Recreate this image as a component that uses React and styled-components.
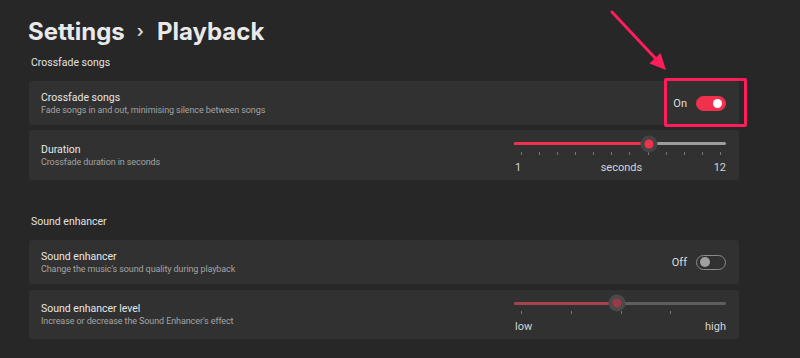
import React from 'react';
import styled, { createGlobalStyle } from 'styled-components';

const GlobalStyle = createGlobalStyle`
  html, body {
    margin: 0;
    padding: 0;
    background: #272727;
  }
  body {
    font-family: Roboto, "Noto Sans", sans-serif;
    color: #e8e8e8;
    -webkit-font-smoothing: antialiased;
  }
`;

const Page = styled.div`
  position: relative;
  width: 800px;
  height: 358px;
  box-sizing: border-box;
  padding: 13px 61px 0 29px;
  overflow: hidden;
`;

const Title = styled.h1`
  margin: 0 0 0 -1px;
  display: flex;
  align-items: center;
  height: 36px;
  font-family: Inter, Roboto, sans-serif;
  font-size: 24px;
  font-weight: 700;
  color: #e9e9e9;
`;

const Crumb = styled.span`
  font-size: 17px;
  font-weight: 600;
  margin: 0 13px 0 12px;
  color: #dcdcdc;
`;

const SectionLabel = styled.div`
  margin-top: ${(p) => p.$top}px;
  padding-left: 2px;
  font-size: 10.5px;
  line-height: 16px;
  color: #e2e2e2;
`;

const List = styled.div`
  display: flex;
  flex-direction: column;
  gap: ${(p) => p.$gap}px;
  margin-top: 10px;
`;

const Card = styled.div`
  position: relative;
  display: flex;
  align-items: center;
  justify-content: space-between;
  height: ${(p) => p.$h}px;
  box-sizing: border-box;
  padding: 0 13px 0 12px;
  background: #313131;
  border-radius: 3px;
`;

const TextCol = styled.div`
  display: flex;
  flex-direction: column;
`;

const CardTitle = styled.div`
  font-size: 10.5px;
  line-height: 13px;
  color: #e6e6e6;
`;

const CardSub = styled.div`
  font-size: 9px;
  line-height: 12px;
  letter-spacing: -0.1px;
  color: #a3a3a3;
`;

const ToggleRow = styled.div`
  display: flex;
  align-items: center;
  gap: 9px;
  font-size: 11px;
  color: #dedede;
`;

const Toggle = styled.div`
  box-sizing: border-box;
  width: 30px;
  height: 15px;
  border-radius: 8px;
  display: flex;
  align-items: center;
  justify-content: ${(p) => (p.$on ? 'flex-end' : 'flex-start')};
  padding: 0 3px;
  background: ${(p) => (p.$on ? '#f0304c' : 'transparent')};
  border: 1px solid ${(p) => (p.$on ? '#f0304c' : '#8a8a8a')};

  &::after {
    content: '';
    width: ${(p) => (p.$on ? 9 : 10)}px;
    height: ${(p) => (p.$on ? 9 : 10)}px;
    border-radius: 50%;
    background: ${(p) => (p.$on ? '#ffffff' : '#a0a0a0')};
  }
`;

const Highlight = styled.div`
  position: absolute;
  top: -3px;
  bottom: -2px;
  right: -8px;
  width: 83px;
  box-sizing: border-box;
  border: 3px solid #ff1d5b;
  border-radius: 2px;
  pointer-events: none;
`;

const SliderBox = styled.div`
  width: 212px;
  display: flex;
  flex-direction: column;
  margin-top: ${(p) => p.$shift}px;
`;

const TrackArea = styled.div`
  position: relative;
  height: 16px;
  display: flex;
  align-items: center;
`;

const Track = styled.div`
  display: flex;
  width: 100%;
  height: 3px;
  border-radius: 2px;
  overflow: hidden;
  background: ${(p) => p.$rest};
`;

const Fill = styled.div`
  height: 100%;
  background: ${(p) => p.$color};
`;

const Thumb = styled.div`
  position: absolute;
  top: 50%;
  width: 9px;
  height: 9px;
  border-radius: 50%;
  background: ${(p) => p.$color};
  box-shadow: 0 0 0 4px ${(p) => p.$halo};
  transform: translate(-50%, -50%);
`;

const Ticks = styled.div`
  display: flex;
  justify-content: space-between;
  padding: 0 5px 0 7px;
  height: 3px;
`;

const Tick = styled.span`
  width: 1px;
  height: 3px;
  background: ${(p) => (p.$hidden ? 'transparent' : '#767676')};
`;

const Scale = styled.div`
  display: flex;
  justify-content: space-between;
  margin-top: 7px;
  padding: 0 0 0 1px;
  font-size: 11px;
  line-height: 12px;
  color: #d4d4d4;

  & > span:nth-child(2):not(:last-child) {
    margin-left: 8px;
  }
`;

const Arrow = styled.svg`
  position: absolute;
  left: 0;
  top: 0;
  pointer-events: none;
`;

function Slider({ value, fill, rest, thumb, halo, ticks, labels, shift }) {
  return (
    <SliderBox $shift={shift}>
      <TrackArea>
        <Track $rest={rest}>
          <Fill $color={fill} style={{ width: `${value}%` }} />
        </Track>
        <Thumb $color={thumb} $halo={halo} style={{ left: `${value}%` }} />
      </TrackArea>
      <Ticks>
        {ticks.map((t, i) => (
          <Tick key={i} $hidden={!t} />
        ))}
      </Ticks>
      <Scale>
        {labels.map((l) => (
          <span key={l}>{l}</span>
        ))}
      </Scale>
    </SliderBox>
  );
}

export default function App() {
  return (
    <>
      <GlobalStyle />
      <Page>
        <Title>
          Settings<Crumb>›</Crumb>Playback
        </Title>

        <SectionLabel $top={6}>Crossfade songs</SectionLabel>
        <List $gap={5}>
          <Card $h={44}>
            <TextCol>
              <CardTitle>Crossfade songs</CardTitle>
              <CardSub>Fade songs in and out, minimising silence between songs</CardSub>
            </TextCol>
            <ToggleRow>
              On
              <Toggle $on />
            </ToggleRow>
            <Highlight />
          </Card>
          <Card $h={50}>
            <TextCol>
              <CardTitle>Duration</CardTitle>
              <CardSub>Crossfade duration in seconds</CardSub>
            </TextCol>
            <Slider
              value={63.5}
              fill="#f0304c"
              rest="#9d9d9d"
              thumb="#f3304e"
              halo="#444444"
              ticks={Array(12).fill(true)}
              labels={['1', 'seconds', '12']}
              shift={-1}
            />
          </Card>
        </List>

        <SectionLabel $top={34}>Sound enhancer</SectionLabel>
        <List $gap={6}>
          <Card $h={44}>
            <TextCol>
              <CardTitle>Sound enhancer</CardTitle>
              <CardSub>Change the music's sound quality during playback</CardSub>
            </TextCol>
            <ToggleRow>
              Off
              <Toggle />
            </ToggleRow>
          </Card>
          <Card $h={49}>
            <TextCol>
              <CardTitle>Sound enhancer level</CardTitle>
              <CardSub>Increase or decrease the Sound Enhancer's effect</CardSub>
            </TextCol>
            <Slider
              value={48.5}
              fill="#a4424e"
              rest="#5e5e5e"
              thumb="#9b3a46"
              halo="#4a4a4a"
              ticks={[true, true, true, true, false]}
              labels={['low', 'high']}
              shift={-1}
            />
          </Card>
        </List>

        <Arrow width="800" height="358" viewBox="0 0 800 358">
          <line x1="612" y1="12" x2="657" y2="60" stroke="#ff1d5b" strokeWidth="3" strokeLinecap="round" />
          <polygon points="666,70 649.5,63.5 660.5,53" fill="#ff1d5b" />
        </Arrow>
      </Page>
    </>
  );
}
